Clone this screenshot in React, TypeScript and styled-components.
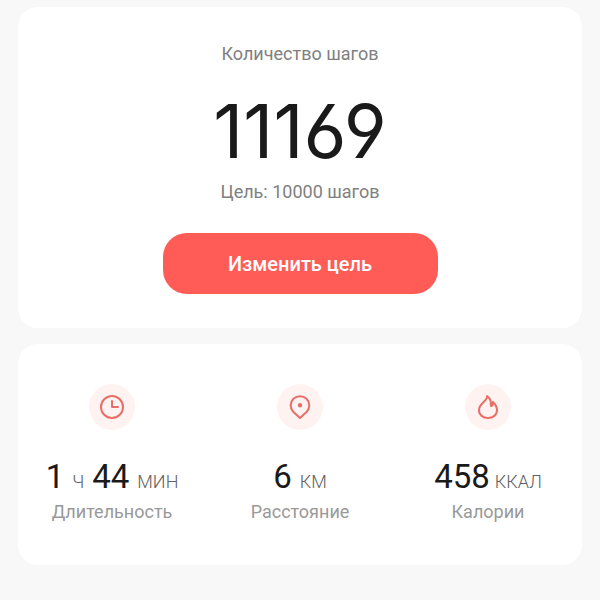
import React from 'react';
import styled, { createGlobalStyle } from 'styled-components';

const GlobalStyle = createGlobalStyle`
  *, *::before, *::after { box-sizing: border-box; }
  body {
    margin: 0;
    background: #f8f8f8;
    font-family: Roboto, "Noto Sans", sans-serif;
    color: #1a1a1a;
  }
`;

const Page = styled.main`
  min-height: 100vh;
  display: flex;
  flex-direction: column;
  gap: 16px;
  padding: 7px 18px 35px;
`;

const Card = styled.section`
  background: #ffffff;
  border-radius: 20px;
`;

const GoalCard = styled(Card)`
  display: flex;
  flex-direction: column;
  align-items: center;
  padding: 35px 24px 34px;
`;

const Caption = styled.p`
  margin: 0;
  font-size: 18px;
  line-height: 24px;
  color: #808080;
`;

const StepCount = styled.h1`
  margin: 27px 0 11px;
  font-family: Inter, sans-serif;
  font-size: 74px;
  line-height: 76px;
  font-weight: 400;
  font-feature-settings: "cv03", "cv04";
  color: #1a1a1a;
`;

const GoalButton = styled.button`
  width: 52%;
  min-width: 275px;
  margin-top: 29px;
  padding: 17px 16px 15px;
  border: 0;
  border-radius: 24px;
  background: #ff5c58;
  color: #ffffff;
  font: 500 20px/29px Roboto, "Noto Sans", sans-serif;
  cursor: pointer;
`;

const StatsCard = styled(Card)`
  display: grid;
  grid-template-columns: repeat(3, 1fr);
  padding: 40px 0 41px;
`;

const Stat = styled.div`
  display: flex;
  flex-direction: column;
  align-items: center;
`;

const IconCircle = styled.div`
  display: grid;
  place-items: center;
  width: 46px;
  height: 46px;
  margin-bottom: 29px;
  border-radius: 50%;
  background: #fff3f2;
`;

const StatIcon = styled.svg`
  width: 28px;
  height: 28px;
  fill: none;
  stroke: #e86e68;
  stroke-width: 2;
  stroke-linecap: round;
  stroke-linejoin: round;
`;

const Value = styled.div<{ $gap?: number }>`
  display: flex;
  align-items: baseline;
  gap: ${({ $gap = 8 }) => $gap}px;
  font-size: 33px;
  line-height: 36px;
  white-space: nowrap;
`;

const Unit = styled.span`
  font-size: 18px;
  font-weight: 300;
  color: #606060;
`;

const Label = styled(Caption)`
  color: #999999;
`;

export default function App() {
  return (
    <>
      <GlobalStyle />
      <Page>
        <GoalCard>
          <Caption>Количество шагов</Caption>
          <StepCount>11169</StepCount>
          <Caption>Цель: 10000 шагов</Caption>
          <GoalButton type="button">Изменить цель</GoalButton>
        </GoalCard>
        <StatsCard>
          <Stat>
            <IconCircle>
              <StatIcon viewBox="0 0 28 28" aria-hidden="true">
                <circle cx="14" cy="14" r="11" />
                <path d="M14 8v6h6" />
              </StatIcon>
            </IconCircle>
            <Value>1 <Unit>Ч</Unit> 44 <Unit>МИН</Unit></Value>
            <Label>Длительность</Label>
          </Stat>
          <Stat>
            <IconCircle>
              <StatIcon viewBox="0 0 28 28" aria-hidden="true">
                <path d="M14 25L7.200 18.800a9.300 9.300 0 1 1 13.600 0z" />
                <circle cx="14" cy="12.300" r="1.200" fill="#e86e68" />
              </StatIcon>
            </IconCircle>
            <Value>6 <Unit>КМ</Unit></Value>
            <Label>Расстояние</Label>
          </Stat>
          <Stat>
            <IconCircle>
              <StatIcon viewBox="0 0 28 28" aria-hidden="true">
                <path d="M13 3c1 5-8 7-8 14 0 5 4 8 9 8s9-3 9-8c0-4-2-6-4-8 0 2 0 4-2 4 0-4 0-7-4-10z" />
              </StatIcon>
            </IconCircle>
            <Value $gap={5}>458 <Unit>ККАЛ</Unit></Value>
            <Label>Калории</Label>
          </Stat>
        </StatsCard>
      </Page>
    </>
  );
}
